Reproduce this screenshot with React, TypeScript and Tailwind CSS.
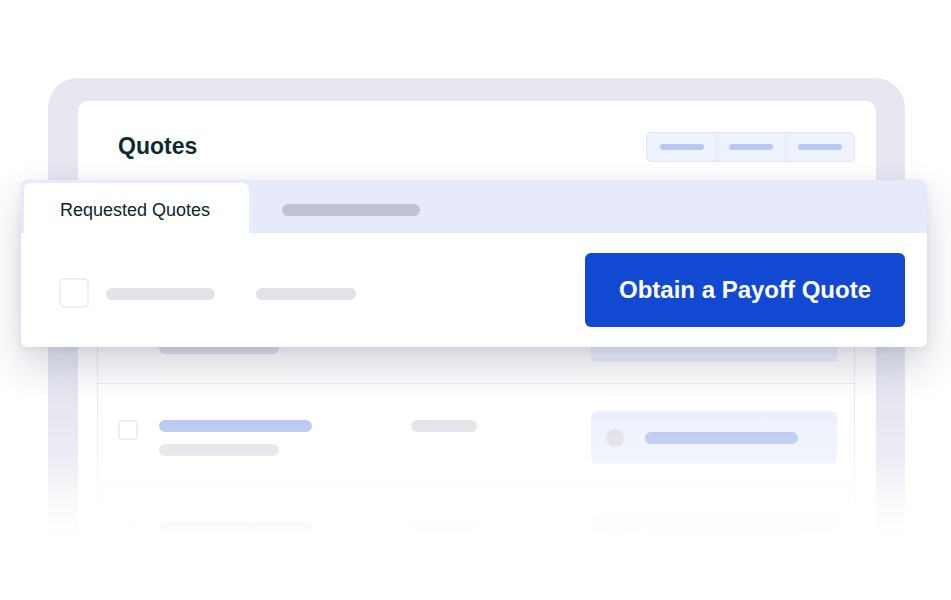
const font = { fontFamily: '"Liberation Sans", Arial, sans-serif' };

function TableRow() {
  return (
    <div className="grid h-[102px] grid-cols-[61px_252px_180px_246px] border-b border-[#ebecf0]">
      <div className="pl-[20px] pt-[36px]">
        <div className="h-[20px] w-[20px] rounded-[4px] border-2 border-[#ecedf0]" />
      </div>
      <div className="flex flex-col gap-[12px] pt-[36px]">
        <div className="h-[12px] w-[153px] rounded-full bg-[#b8c8f0]" />
        <div className="h-[12px] w-[120px] rounded-full bg-[#e3e4e9]" />
      </div>
      <div className="pt-[36px]">
        <div className="h-[12px] w-[66px] rounded-full bg-[#e3e4e9]" />
      </div>
      <div className="pt-[27px]">
        <div className="flex h-[53px] items-center rounded-[6px] bg-[#eef1fc] pl-[15px]">
          <div className="h-[18px] w-[18px] rounded-full bg-[#dfe1e8]" />
          <div className="ml-[21px] h-[12px] w-[153px] rounded-full bg-[#b8c8f0]" />
        </div>
      </div>
    </div>
  );
}

function Segmented() {
  return (
    <div className="flex h-[30px] overflow-hidden rounded-[5px] border border-[#dfe5f5] bg-[#eef2fd]">
      {[0, 1, 2].map((i) => (
        <div
          key={i}
          className={`flex w-[69px] items-center justify-center ${i > 0 ? "border-l border-[#dfe5f5]" : ""}`}
        >
          <div className="h-[6px] w-[44px] rounded-full bg-[#b8c8f0]" />
        </div>
      ))}
    </div>
  );
}

export default function App() {
  return (
    <div className="relative h-[600px] w-[951px] overflow-hidden bg-white" style={font}>
      {/* device frame */}
      <div className="ml-[48px] mt-[78px] h-[560px] w-[857px] rounded-[30px] bg-[#e6e7f1] pl-[30px] pr-[29px] pt-[23px]">
        <div className="h-full rounded-t-[10px] bg-white">
          <div className="flex items-start justify-between pl-[40px] pr-[21px] pt-[31px]">
            <h1 className="text-[23px] font-bold leading-[28px] text-[#0d2a2e]">Quotes</h1>
            <Segmented />
          </div>
          <div className="mx-[19px] mt-[28px] mr-[21px] border-x border-[#ebecf0]">
            <div className="h-[92px] border-b border-[#ebecf0]" />
            <TableRow />
            <TableRow />
            <TableRow />
          </div>
        </div>
      </div>

      {/* floating tabs card */}
      <div className="absolute left-[21px] top-[180px] w-[906px] overflow-hidden rounded-[6px] bg-white shadow-[0_18px_40px_rgba(30,40,80,0.2),0_2px_8px_rgba(30,40,80,0.07)]">
        <div className="flex h-[53px] items-end bg-[#e6eafa] pl-[3px]">
          <div className="flex h-[50px] w-[225px] items-center rounded-t-[6px] bg-white pl-[36px] pt-[3px]">
            <span className="text-[18px] leading-[22px] text-[#0b2529]">Requested Quotes</span>
          </div>
          <div className="mb-[17px] ml-[33px] h-[12px] w-[138px] rounded-full bg-[#c0c3d3]" />
        </div>
        <div className="flex h-[114px] items-center pl-[38px] pr-[22px]">
          <div className="mt-[6px] h-[30px] w-[30px] rounded-[5px] border-2 border-[#eeeff2]" />
          <div className="ml-[17px] mt-[8px] h-[12px] w-[109px] rounded-full bg-[#e2e3e8]" />
          <div className="ml-[41px] mt-[8px] h-[12px] w-[100px] rounded-full bg-[#e2e3e8]" />
          <button className="ml-auto flex h-[74px] w-[320px] items-center justify-center rounded-[6px] bg-[#1149d2] text-[24px] font-bold text-white">
            Obtain a Payoff Quote
          </button>
        </div>
      </div>

      {/* bottom fade */}
      <div className="pointer-events-none absolute inset-x-0 bottom-0 top-[415px] bg-[linear-gradient(to_bottom,rgba(255,255,255,0)_0px,rgba(255,255,255,0.25)_45px,rgba(255,255,255,0.75)_80px,rgba(255,255,255,0.9)_108px,rgba(255,255,255,1)_122px)]" />
    </div>
  );
}
